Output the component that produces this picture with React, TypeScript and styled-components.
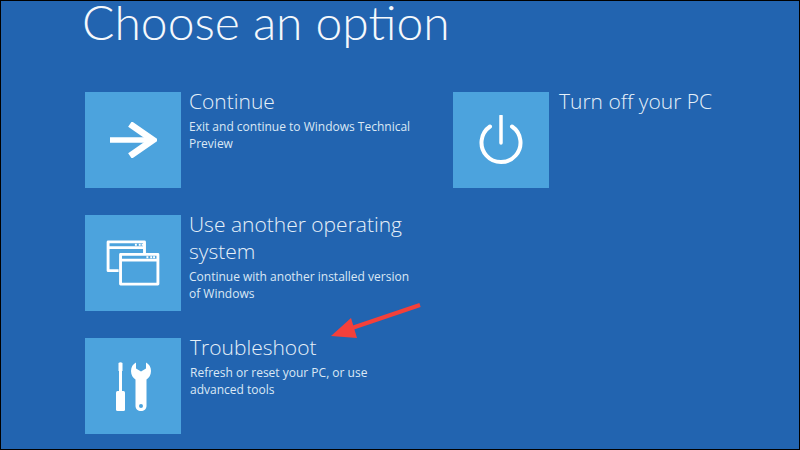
import React from 'react';
import styled, { createGlobalStyle } from 'styled-components';

const GlobalStyle = createGlobalStyle`
  html, body {
    margin: 0;
    padding: 0;
    background: #000;
  }
`;

const Screen = styled.div`
  position: relative;
  box-sizing: border-box;
  width: 800px;
  height: 450px;
  border: 1px solid #000;
  padding: 0 0 0 84px;
  overflow: hidden;
  background: #2264b0;
  color: #fff;
  font-family: "Open Sans", "Liberation Sans", sans-serif;
`;

const Title = styled.h1`
  margin: 0 0 50px -3px;
  font-family: Lato, "Open Sans", sans-serif;
  font-size: 48px;
  line-height: 41px;
  font-weight: 300;
  color: #f4f8fc;
`;

const Columns = styled.div`
  display: flex;
  gap: 27px;
`;

const Column = styled.div`
  display: flex;
  flex-direction: column;
  gap: 27px;
  width: 341px;
`;

const Option = styled.div`
  display: flex;
  gap: 8px;
  height: 96px;
`;

const Tile = styled.div`
  flex: none;
  display: flex;
  align-items: center;
  justify-content: center;
  width: 96px;
  height: 96px;
  background: #4ca3dd;
`;

const Text = styled.div<{ $inset?: number }>`
  min-width: 0;
  width: 232px;
  padding-left: ${(p) => p.$inset ?? 0}px;
`;

const OptionTitle = styled.div`
  font-size: 21px;
  line-height: 27px;
  font-weight: 300;
  color: #e6f0f9;
  margin-top: -4px;
  white-space: pre-line;
`;

const Note = styled.div`
  font-size: 12px;
  line-height: 17px;
  color: #dbe8f5;
  margin-top: 3px;
  white-space: pre-line;
`;

const Pointer = styled.svg`
  position: absolute;
  left: 329px;
  top: 302px;
`;

const ArrowIcon = () => (
  <svg width="48" height="36" viewBox="0 0 48 36" fill="none">
    <path d="M1 18H42" stroke="#fff" strokeWidth="5.5" />
    <path d="M21 2L44 18L21 34" stroke="#fff" strokeWidth="6.5" />
  </svg>
);

const PowerIcon = () => (
  <svg width="44" height="50" viewBox="0 0 44 50" fill="none" stroke="#fff" strokeWidth="4">
    <path d="M22 1V28" strokeWidth="3.5" strokeLinecap="round" />
    <path d="M11 11.5A19.5 19.5 0 1 0 33 11.5" strokeLinecap="round" />
  </svg>
);

const WindowsIcon = () => (
  <svg width="54" height="46" viewBox="0 0 56 48" fill="none" stroke="#fff" strokeWidth="3">
    <path d="M13 32H2V2H40V14" strokeLinejoin="round" />
    <path d="M2 8H40" />
    <path d="M15 15H54V46H15Z" strokeLinejoin="round" />
    <path d="M15 21H54" />
    <path d="M30 5H32M34 5H36M37 5H39M42 18H44M46 18H48M49 18H51" strokeWidth="2" />
  </svg>
);

const ToolsIcon = () => (
  <svg width="35" height="49" viewBox="0 0 35 49" fill="#fff">
    <path d="M2.5 1Q4.5 -0.5 6.5 1V9H6V29H3V9H2.5Z" />
    <path d="M0 30.5Q0 29 1.5 29H7.5Q9 29 9 30.5V47.5Q9 49 7.5 49H1.5Q0 49 0 47.5Z" />
    <path
      fillRule="evenodd"
      d="M20 0.5V6.5L25 9.5L30 6.5V0.5C33 2 35 5 35 9C35 13 33 16 30.5 17.5V44C30.5 47 28 49 25 49C22 49 19.5 47 19.5 44V17.5C17 16 15 13 15 9C15 5 17 2 20 0.5ZM25 42A2 2 0 1 0 25 46A2 2 0 1 0 25 42Z"
    />
  </svg>
);

export default function App() {
  return (
    <Screen>
      <GlobalStyle />
      <Title>Choose an option</Title>
      <Columns>
        <Column>
          <Option>
            <Tile><ArrowIcon /></Tile>
            <Text>
              <OptionTitle>Continue</OptionTitle>
              <Note>{'Exit and continue to Windows Technical\nPreview'}</Note>
            </Text>
          </Option>
          <Option>
            <Tile><WindowsIcon /></Tile>
            <Text>
              <OptionTitle>{'Use another operating\nsystem'}</OptionTitle>
              <Note>{'Continue with another installed version\nof Windows'}</Note>
            </Text>
          </Option>
          <Option>
            <Tile><ToolsIcon /></Tile>
            <Text $inset={1}>
              <OptionTitle>Troubleshoot</OptionTitle>
              <Note>{'Refresh or reset your PC, or use\nadvanced tools'}</Note>
            </Text>
          </Option>
        </Column>
        <Column>
          <Option>
            <Tile><PowerIcon /></Tile>
            <Text $inset={2}>
              <OptionTitle>Turn off your PC</OptionTitle>
            </Text>
          </Option>
        </Column>
      </Columns>
      <Pointer width="92" height="40" viewBox="0 0 92 40">
        <path d="M90 2L22 25" stroke="#f4403a" strokeWidth="4" />
        <path d="M1 33L21 15L27 35Z" fill="#f4403a" />
      </Pointer>
    </Screen>
  );
}
